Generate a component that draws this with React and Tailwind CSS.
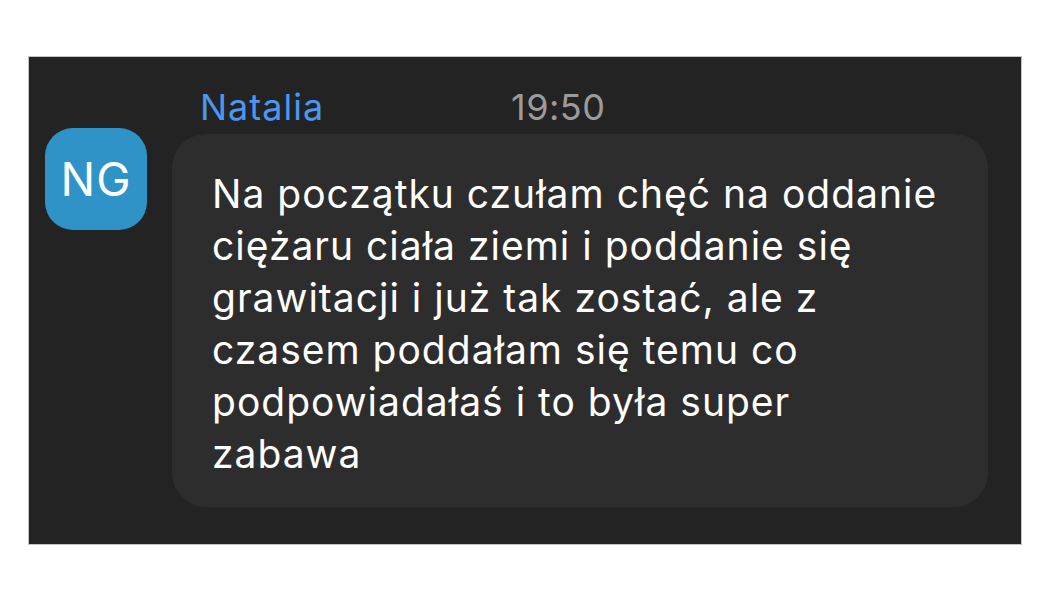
import React from "react";

const lines = [
  "Na początku czułam chęć na oddanie",
  "ciężaru ciała ziemi i poddanie się",
  "grawitacji i już tak zostać, ale z",
  "czasem poddałam się temu co",
  "podpowiadałaś i to była super",
  "zabawa",
];

const App = () => {
  return (
    <div className="w-[1050px] h-[600px] bg-white pt-[56px] pl-[28px] font-['Inter','Liberation_Sans',sans-serif]">
      <div className="w-[994px] h-[489px] bg-[#232323] border border-[#c4c4c4] flex">
        {/* avatar */}
        <div className="pl-[16px] pt-[71px]">
          <div className="w-[102px] h-[102px] rounded-[28px] bg-[#2f93c8] flex items-center justify-center text-white text-[46px] tracking-[1px]">
            NG
          </div>
        </div>

        {/* message */}
        <div className="ml-[25px] flex flex-col">
          <div className="flex items-baseline pl-[28px] pt-[23px] h-[77px] text-[36px] leading-[54px]">
            <span className="w-[311px] text-[#4a98ef] tracking-[1px]">Natalia</span>
            <span className="text-[#9b9b9b] tracking-[0.5px]">19:50</span>
          </div>
          <div className="w-[816px] h-[373px] rounded-[34px] bg-[#2d2d2d] pl-[40px] pt-[34px] text-[39px] leading-[52px] tracking-[1px] text-white">
            {lines.map((line) => (
              <div key={line}>{line}</div>
            ))}
          </div>
        </div>
      </div>
    </div>
  );
};

export default App;
